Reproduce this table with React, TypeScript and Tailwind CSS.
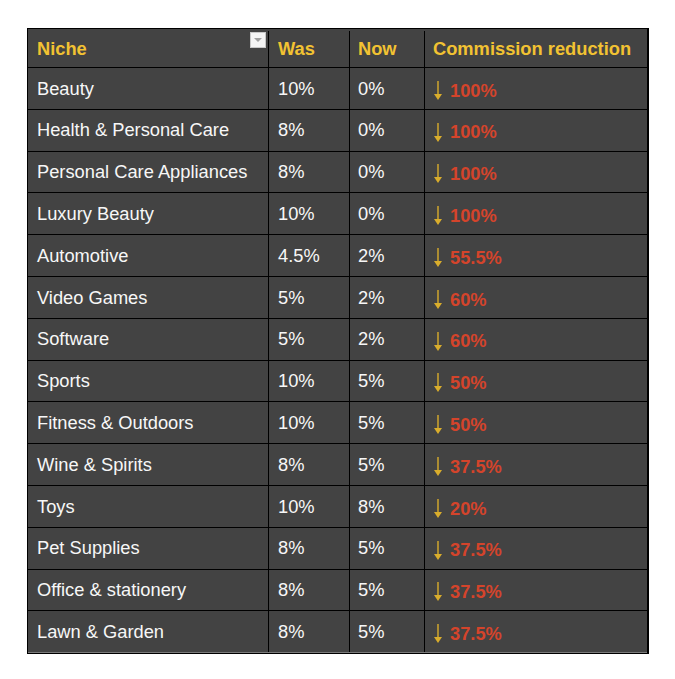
import React from "react";

const rows: [string, string, string, string][] = [
  ["Beauty", "10%", "0%", "100%"],
  ["Health & Personal Care", "8%", "0%", "100%"],
  ["Personal Care Appliances", "8%", "0%", "100%"],
  ["Luxury Beauty", "10%", "0%", "100%"],
  ["Automotive", "4.5%", "2%", "55.5%"],
  ["Video Games", "5%", "2%", "60%"],
  ["Software", "5%", "2%", "60%"],
  ["Sports", "10%", "5%", "50%"],
  ["Fitness & Outdoors", "10%", "5%", "50%"],
  ["Wine & Spirits", "8%", "5%", "37.5%"],
  ["Toys", "10%", "8%", "20%"],
  ["Pet Supplies", "8%", "5%", "37.5%"],
  ["Office & stationery", "8%", "5%", "37.5%"],
  ["Lawn & Garden", "8%", "5%", "37.5%"],
];

function Arrow() {
  return (
    <svg width="10" height="19" viewBox="0 0 10 19" className="shrink-0">
      <line x1="5" y1="0" x2="5" y2="15" stroke="#d9ad2c" strokeWidth="1.4" />
      <path d="M1 13 L9 13 L5 19 Z" fill="#d9ad2c" />
    </svg>
  );
}

export default function App() {
  return (
    <div
      className="min-h-[679px] w-[675px] bg-white pt-[28px] pl-[27px]"
      style={{ fontFamily: '"Liberation Sans", Arial, sans-serif' }}
    >
      <div className="w-[622px] border-l border-t border-r-2 border-b border-black bg-[#434343] text-[18.3px]">
        <div className="flex h-[39px] border-b border-black pt-[2px] font-bold text-[#f2c232]">
          <div className="relative flex w-[241px] items-center border-r border-black pl-[9px]">
            Niche
            <div className="absolute right-[2px] top-[1px] flex h-[16px] w-[16px] items-center justify-center border border-[#c8c8c8] bg-[#f4f4f4]">
              <div className="h-0 w-0 border-x-[4px] border-t-[4px] border-x-transparent border-t-[#a0a0a0]" />
            </div>
          </div>
          <div className="flex w-[81px] items-center border-r border-black pl-[9px]">Was</div>
          <div className="flex w-[75px] items-center border-r border-black pl-[8px]">Now</div>
          <div className="flex flex-1 items-center pl-[8px]">Commission reduction</div>
        </div>
        {rows.map((r, i) => (
          <div
            key={i}
            className={`flex h-[41.8px] text-[#f7f7f7] ${
              i === rows.length - 1 ? "border-b border-[#7a7a7a]" : "border-b border-black"
            }`}
          >
            <div className="flex w-[241px] items-center border-r border-black pl-[9px]">{r[0]}</div>
            <div className="flex w-[81px] items-center border-r border-black pl-[9px]">{r[1]}</div>
            <div className="flex w-[75px] items-center border-r border-black pl-[8px]">{r[2]}</div>
            <div className="flex flex-1 items-center gap-[7px] pl-[8px] pt-[4px]">
              <Arrow />
              <span className="font-bold text-[#d4442b]">{r[3]}</span>
            </div>
          </div>
        ))}
      </div>
    </div>
  );
}
